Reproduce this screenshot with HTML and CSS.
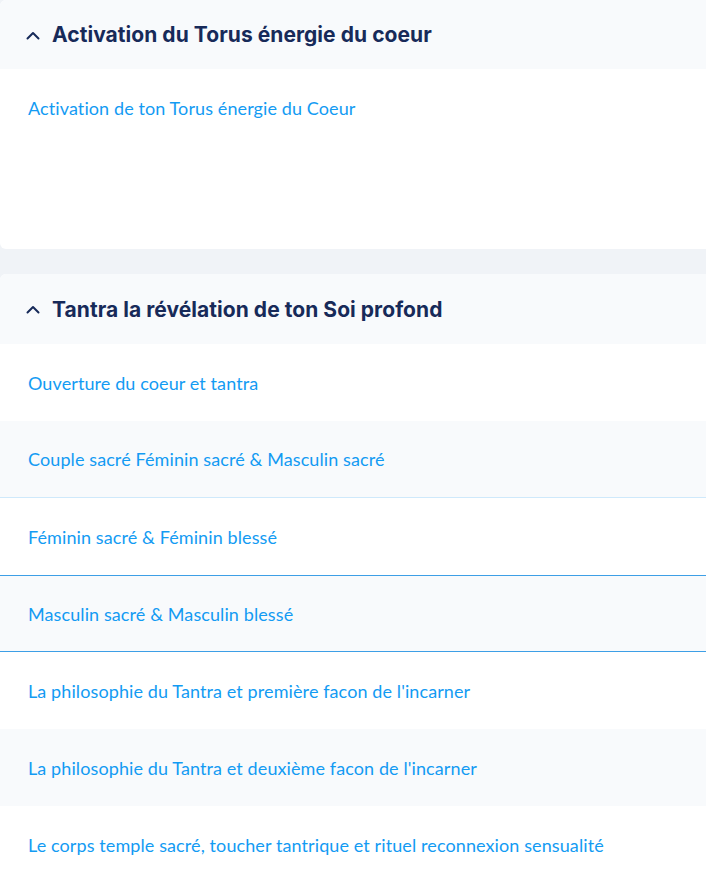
FILE: index.html
```html
<!DOCTYPE html>
<html lang="fr">

<head>
    <meta charset="UTF-8">
    <meta name="viewport" content="width=device-width, initial-scale=1.0">
    <title>Modules</title>
    <link rel="stylesheet" href="styles.css">
</head>

<body>
    <div class="modules">
        <section class="module">
            <div class="module-head">
                <svg class="chevron" viewBox="0 0 14 9" width="14" height="9"><path d="M1.5 7.5 L7 2 L12.5 7.5" fill="none" stroke="currentColor" stroke-width="2" stroke-linecap="round" stroke-linejoin="round"/></svg>
                <h2>Activation du Torus énergie du coeur</h2>
            </div>
            <div class="module-body tall">
                <a class="lesson" href="#">Activation de ton Torus énergie du Coeur</a>
            </div>
        </section>

        <section class="module">
            <div class="module-head">
                <svg class="chevron" viewBox="0 0 14 9" width="14" height="9"><path d="M1.5 7.5 L7 2 L12.5 7.5" fill="none" stroke="currentColor" stroke-width="2" stroke-linecap="round" stroke-linejoin="round"/></svg>
                <h2>Tantra la révélation de ton Soi profond</h2>
            </div>
            <div class="module-body">
                <a class="lesson" href="#">Ouverture du coeur et tantra</a>
                <a class="lesson alt soft-line" href="#">Couple sacré Féminin sacré &amp; Masculin sacré</a>
                <a class="lesson" href="#">Féminin sacré &amp; Féminin blessé</a>
                <a class="lesson alt active" href="#">Masculin sacré &amp; Masculin blessé</a>
                <a class="lesson" href="#">La philosophie du Tantra et première facon de l'incarner</a>
                <a class="lesson alt" href="#">La philosophie du Tantra et deuxième facon de l'incarner</a>
                <a class="lesson" href="#">Le corps temple sacré, toucher tantrique et rituel reconnexion sensualité</a>
            </div>
        </section>
    </div>
</body>

</html>
```

FILE: styles.css
```css
body {
    margin: 0;
    background-color: #f0f3f7;
    font-family: Inter, "Noto Sans", sans-serif;
}

.modules {
    width: calc(100% + 12px);
}

.module {
    background-color: #fff;
    border-radius: 6px;
    overflow: hidden;
}

.module + .module {
    margin-top: 25px;
}

.module-head {
    display: flex;
    align-items: center;
    gap: 12px;
    height: 69px;
    padding-left: 26px;
    background-color: #f8fafc;
    color: #172a59;
}

.module + .module .module-head {
    height: 70px;
}

.chevron {
    display: block;
    margin-top: 1px;
}

.module-head h2 {
    margin: 0;
    font-size: 21px;
    font-weight: 700;
    letter-spacing: 0.05px;
}

.module-body {
    display: flex;
    flex-direction: column;
}

.module-body.tall {
    min-height: 180px;
}

.lesson {
    display: flex;
    align-items: center;
    height: 77px;
    padding-left: 28px;
    font-family: Lato, sans-serif;
    font-size: 18px;
    letter-spacing: 0.1px;
    color: #139bf3;
    text-decoration: none;
    box-sizing: border-box;
}

.lesson.alt {
    background-color: #f8fafc;
}

.lesson.soft-line {
    border-bottom: 1px solid #cfe9fb;
}

.lesson.active {
    border-top: 1px solid #3d9fe6;
    border-bottom: 1px solid #3d9fe6;
}
```
